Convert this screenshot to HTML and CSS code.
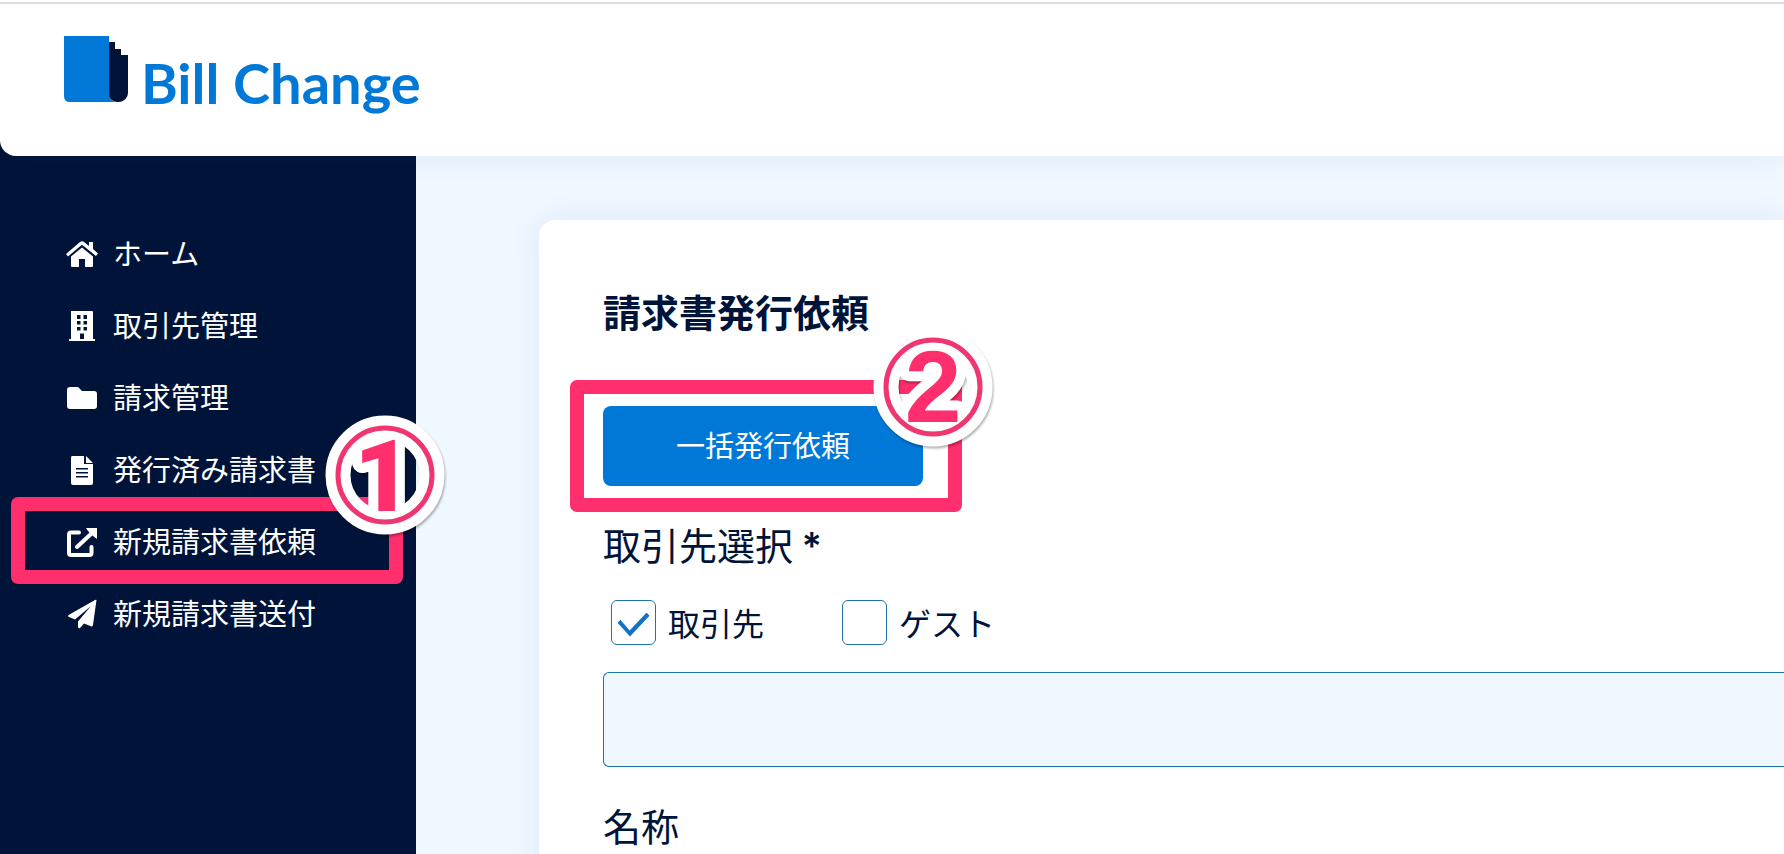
FILE: index.html
```html
<!DOCTYPE html>
<html lang="ja">
<head>
<meta charset="utf-8">
<title>Bill Change</title>
<link rel="stylesheet" href="styles.css">
</head>
<body>
<header class="header">
  <a class="logo" href="#">
    <svg class="logo-mark" viewBox="0 0 64 67" aria-hidden="true">
      <path fill="#001439" d="M44 6h7v7h6v6h7v38a9 9 0 0 1-9 9h-2a9 9 0 0 1-9-9z"/>
      <path fill="#0078d8" d="M0 0h45v58q0 6 6 8H6q-6 0-6-6z"/>
    </svg>
    <span class="logo-text">Bill Change</span>
  </a>
</header>
<div class="layout">
  <nav class="sidebar">
    <ul class="menu">
      <li><a href="#"><svg class="icon" viewBox="0 0 32 32"><path d="M0 16 14 4q2-1.600 4 0l5 4V4h4v7l5 4.500-2 2.500L17 7.500q-1-.8-2 0L2 18.500z"/><path d="M5 18.500 16 9.500l11 9V28q0 1-1 1h-7v-8h-6v8H6q-1 0-1-1z"/></svg>ホーム</a></li>
      <li><a href="#"><svg class="icon" viewBox="0 0 32 32"><path fill-rule="evenodd" d="M5 1h21q1 0 1 1v27h2v2H3v-2h2zM11 5v4h3.500V5zm6.500 0v4H21V5zM11 11v3.500h3.500V11zm6.500 0v3.500H21V11zM11 17v3.500h3.500V17zm6.500 0v3.500H21V17zM14 23.500V29h4v-5.500z"/></svg>取引先管理</a></li>
      <li><a href="#"><svg class="icon" viewBox="0 0 32 32"><path d="M1 8q0-3 3-3h8l4 4h12q3 0 3 3v12q0 3-3 3H4q-3 0-3-3z"/></svg>請求管理</a></li>
      <li><a href="#"><svg class="icon" viewBox="0 0 32 32"><path fill-rule="evenodd" d="M6 2h12v8h9v19q0 2-2 2H7q-2 0-2-2V4q0-2 1-2zM10 14v1.500h12V14zm0 4v1.500h12V18zm0 4v1.500h12V22z"/><path d="M20 2l7 7h-7z"/></svg>発行済み請求書</a></li>
      <li class="marked">
        <a href="#"><svg class="icon" viewBox="0 0 32 32"><path class="line" d="M13 6.500H5q-2 0-2 2V27q0 2 2 2h18.500q2 0 2-2v-6M11 21 26 7"/><path d="M20 2h11v11l-4-3-5-5z"/></svg>新規請求書依頼</a>
        <span class="frame frame-menu"></span>
        <svg class="badge badge-menu" viewBox="0 0 120 120"><circle class="halo" cx="60" cy="60" r="47"/><text class="one" x="58" y="96">1</text><circle class="ring" cx="60" cy="60" r="47"/></svg>
      </li>
      <li><a href="#"><svg class="icon" viewBox="0 0 32 32"><path d="M30.500 2 27 27q-.3 2-2 1.300L18 25.500 14 30q-1.500 1-2-1v-5.500L25 8 9 21.500 3 19q-2-1 0-2.300L29 2q1.300-.6 1.500 0z"/></svg>新規請求書送付</a></li>
    </ul>
  </nav>
  <main class="content">
    <form class="card">
      <h1 class="title">請求書発行依頼</h1>
      <div class="bulk">
        <button class="bulk-button" type="button">一括発行依頼</button>
        <span class="frame frame-bulk"></span>
        <svg class="badge badge-bulk" viewBox="0 0 120 120"><circle class="halo" cx="60" cy="60" r="47"/><text class="two" x="60" y="95">2</text><circle class="ring" cx="60" cy="60" r="47"/></svg>
      </div>
      <label class="field-label" for="client">取引先選択 <span class="required">*</span></label>
      <div class="choices">
        <label class="choice"><input type="checkbox" checked>取引先</label>
        <label class="choice"><input type="checkbox">ゲスト</label>
      </div>
      <input class="field" id="client" type="text">
      <label class="field-label" for="name">名称</label>
      <input class="field" id="name" type="text">
    </form>
  </main>
</div>
</body>
</html>
```
FILE: styles.css
```css
* { box-sizing: border-box; }

body {
  margin: 0;
  height: 100vh;
  display: flex;
  flex-direction: column;
  overflow: hidden;
  background: #001439;
  color: #001439;
  font-family: "Noto Sans CJK JP", sans-serif;
}

.header {
  position: relative;
  z-index: 1;
  flex: none;
  padding: 34px 64px 32px;
  background: #fff linear-gradient(#dcdcdc, #dcdcdc) 0 2px / 100% 2px no-repeat;
  border-bottom-left-radius: 16px;
  box-shadow: 0 0 32px rgba(0, 80, 180, 0.07);
}

.logo {
  display: flex;
  align-items: flex-start;
  gap: 13px;
  height: 90px;
  color: #0078d8;
  text-decoration: none;
}

.logo-mark { width: 64px; height: 67px; margin-top: 2px; }

.logo-text {
  font: bold 56px/98px Lato, sans-serif;
}

.layout {
  flex: 1;
  min-height: 0;
  display: flex;
}

.sidebar {
  flex: none;
  width: 416px;
  padding: 60px 0 0;
}

.menu {
  margin: 0;
  padding: 0;
  list-style: none;
}

.menu a {
  display: flex;
  align-items: center;
  gap: 15px;
  height: 72px;
  padding-left: 66px;
  color: #fff;
  font-size: 29px;
  text-decoration: none;
}

.icon { width: 32px; height: 32px; margin-top: 4px; fill: #fff; }
.icon .line { fill: none; stroke: #fff; stroke-width: 4; stroke-linecap: round; }

.marked, .bulk { position: relative; }

.frame {
  position: absolute;
  border: 14px solid #ff2e6c;
  border-radius: 7px;
  pointer-events: none;
}

.frame-menu { inset: -7px 13px -8px 11px; }
.frame-bulk { inset: -26px -39px -26px -33px; }

.badge {
  position: absolute;
  z-index: 2;
  width: 120px;
  height: 120px;
  overflow: visible;
  filter: drop-shadow(1px 2px 1px rgba(0, 0, 0, 0.3));
  pointer-events: none;
}

.badge-menu { right: -29px; top: -89px; }
.badge-bulk { right: -70px; top: -79px; }

.badge circle { fill: none; }
.halo { stroke: #fff; stroke-width: 25; }
.ring { stroke: #f03670; stroke-width: 5; }

.badge text {
  text-anchor: middle;
  fill: #ff2e6c;
  stroke: #fff;
  stroke-width: 20px;
  stroke-linejoin: round;
  paint-order: stroke;
}

.badge .one { font: 900 100px Roboto, sans-serif; }
.badge .two { font: bold 102px "Liberation Sans", sans-serif; }

.content {
  flex: 1;
  min-width: 0;
  padding: 64px 0 0 123px;
  background: #eff7ff;
}

.card {
  padding: 62px 0 64px 64px;
  background: #fff;
  border-top-left-radius: 16px;
  box-shadow: 0 0 32px rgba(0, 80, 180, 0.08);
}

.title {
  margin: 0 0 66px;
  font-size: 38px;
  line-height: 58px;
}

.bulk {
  width: 320px;
  margin-bottom: 29px;
}

.bulk-button {
  display: block;
  width: 100%;
  height: 80px;
  padding: 0 0 4px;
  border: 0;
  border-radius: 8px;
  background: #0078d8;
  color: #fff;
  font: 29px "Noto Sans CJK JP", sans-serif;
}

.field-label {
  display: block;
  font-size: 38px;
  line-height: 58px;
}

.required {
  font-family: Inter, sans-serif;
  font-weight: 600;
  line-height: 1;
}

.choices {
  display: flex;
  gap: 78px;
  margin: 27px 0 27px 8px;
}

.choice {
  display: flex;
  align-items: center;
  gap: 12px;
  font-size: 32px;
  line-height: 45px;
}

.choice input {
  appearance: none;
  flex: none;
  display: grid;
  place-items: center;
  width: 45px;
  height: 45px;
  margin: 0;
  border: 1px solid #1d74a8;
  border-radius: 6px;
  background: #fff;
}

.choice input:checked::before {
  content: "";
  width: 32px;
  height: 24px;
  margin-top: 4px;
  background: #0f74c8;
  clip-path: polygon(0 43%, 9% 30%, 38% 75%, 91% 0, 100% 14%, 39% 100%);
}

.field {
  display: block;
  width: 100%;
  height: 95px;
  margin-bottom: 29px;
  padding: 0 24px;
  border: 1px solid #1d74a8;
  border-right: 0;
  border-radius: 6px 0 0 6px;
  background: #eff7ff;
  color: #001439;
  font: 32px "Noto Sans CJK JP", sans-serif;
}
```
